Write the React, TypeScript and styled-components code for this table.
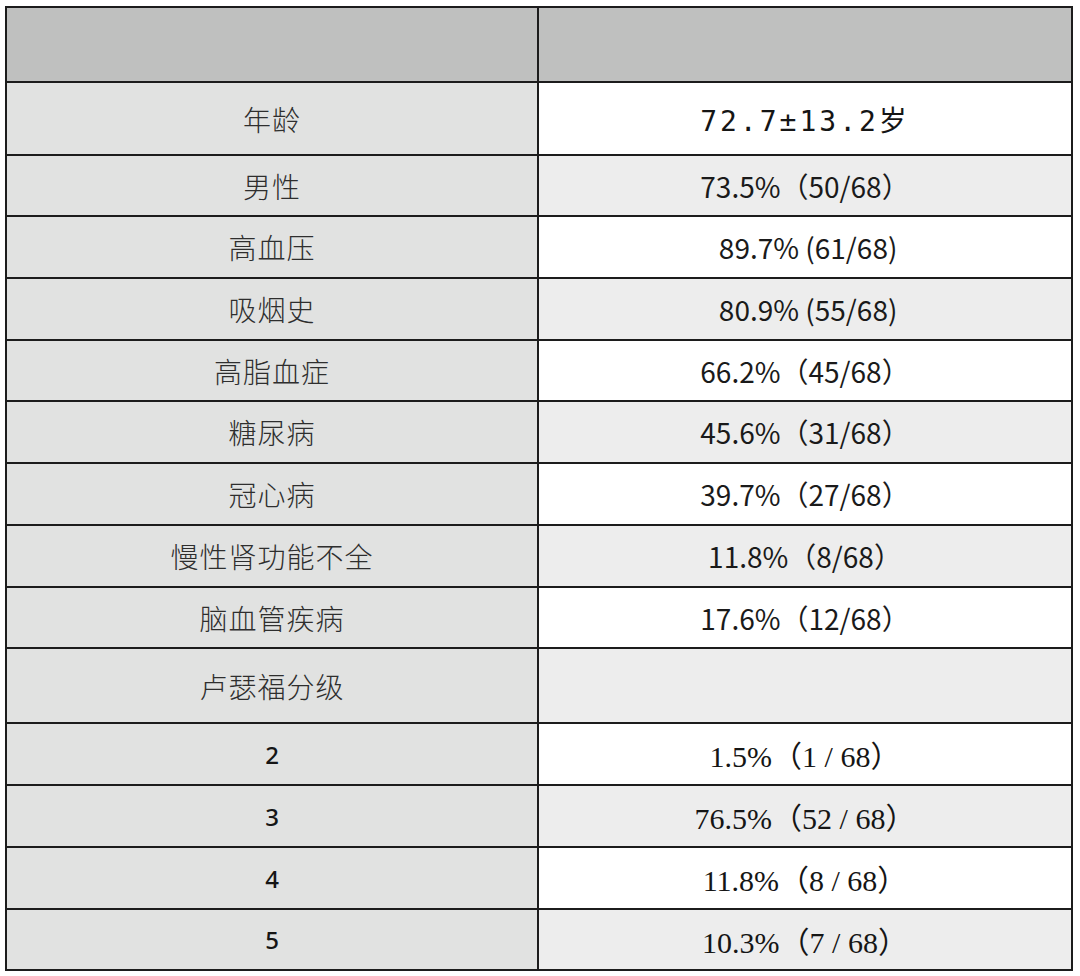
import React from 'react';
import styled, { createGlobalStyle } from 'styled-components';

const GlobalStyle = createGlobalStyle`
  html, body {
    margin: 0;
    padding: 0;
    background: #ffffff;
  }
  body {
    font-family: "Noto Sans CJK SC", "Noto Sans", sans-serif;
    color: #111111;
  }
`;

const Page = styled.div`
  padding: 6px 0 0 5px;
`;

const Grid = styled.div`
  display: grid;
  grid-template-columns: 530px 532px;
  gap: 2px;
  padding: 2px;
  width: 1068px;
  box-sizing: border-box;
  background: #1c1c1c;
`;

type Kind = 'head' | 'label' | 'plain' | 'shade';
type Face = 'cjk' | 'mono' | 'sans' | 'serif' | 'digit';

const fills: Record<Kind, string> = {
  head: '#bfc0bf',
  label: '#e1e2e1',
  plain: '#ffffff',
  shade: '#ededed',
};

const faces: Record<Face, { family: string; size: number; weight: number; track: number; color: string }> = {
  cjk: { family: '"Noto Sans CJK SC", sans-serif', size: 28, weight: 300, track: 1, color: '#2e2e2e' },
  mono: { family: '"DejaVu Sans Mono", "Noto Sans CJK SC", monospace', size: 28, weight: 400, track: 3, color: '#151515' },
  sans: { family: '"Noto Sans CJK SC", sans-serif', size: 28, weight: 400, track: 0, color: '#1a1a1a' },
  serif: { family: '"Liberation Serif", "Noto Sans CJK SC", serif', size: 30, weight: 400, track: 0, color: '#151515' },
  digit: { family: '"Noto Sans", sans-serif', size: 24, weight: 500, track: 0, color: '#151515' },
};

const Cell = styled.div<{ $kind: Kind; $h: number; $face?: Face }>`
  background: ${p => fills[p.$kind]};
  height: ${p => p.$h}px;
  display: flex;
  align-items: center;
  justify-content: center;
  font-family: ${p => faces[p.$face || 'cjk'].family};
  font-size: ${p => faces[p.$face || 'cjk'].size}px;
  font-weight: ${p => faces[p.$face || 'cjk'].weight};
  letter-spacing: ${p => faces[p.$face || 'cjk'].track}px;
  color: ${p => faces[p.$face || 'cjk'].color};
  white-space: pre;
`;

type Row = { label: string; value: string; h: number; labelFace?: Face; valueFace?: Face };

const rows: Row[] = [
  { label: '年龄', value: '72.7±13.2岁', h: 71, valueFace: 'mono' },
  { label: '男性', value: '73.5%（50/68）', h: 59, valueFace: 'sans' },
  { label: '高血压', value: ' 89.7% (61/68)', h: 60, valueFace: 'sans' },
  { label: '吸烟史', value: ' 80.9% (55/68)', h: 60, valueFace: 'sans' },
  { label: '高脂血症', value: '66.2%（45/68）', h: 59, valueFace: 'sans' },
  { label: '糖尿病', value: '45.6%（31/68）', h: 60, valueFace: 'sans' },
  { label: '冠心病', value: '39.7%（27/68）', h: 60, valueFace: 'sans' },
  { label: '慢性肾功能不全', value: '11.8%（8/68）', h: 60, valueFace: 'sans' },
  { label: '脑血管疾病', value: '17.6%（12/68）', h: 59, valueFace: 'sans' },
  { label: '卢瑟福分级', value: '', h: 73 },
  { label: '2', value: '1.5%（1 / 68）', h: 60, labelFace: 'digit', valueFace: 'serif' },
  { label: '3', value: '76.5%（52 / 68）', h: 60, labelFace: 'digit', valueFace: 'serif' },
  { label: '4', value: '11.8%（8 / 68）', h: 60, labelFace: 'digit', valueFace: 'serif' },
  { label: '5', value: '10.3%（7 / 68）', h: 59, labelFace: 'digit', valueFace: 'serif' },
];

export default function App() {
  return (
    <Page>
      <GlobalStyle />
      <Grid>
        <Cell $kind="head" $h={73} />
        <Cell $kind="head" $h={73} />
        {rows.map((r, i) => (
          <React.Fragment key={r.label}>
            <Cell $kind="label" $h={r.h} $face={r.labelFace}>
              {r.label}
            </Cell>
            <Cell $kind={i % 2 === 0 ? 'plain' : 'shade'} $h={r.h} $face={r.valueFace}>
              {r.value}
            </Cell>
          </React.Fragment>
        ))}
      </Grid>
    </Page>
  );
}
